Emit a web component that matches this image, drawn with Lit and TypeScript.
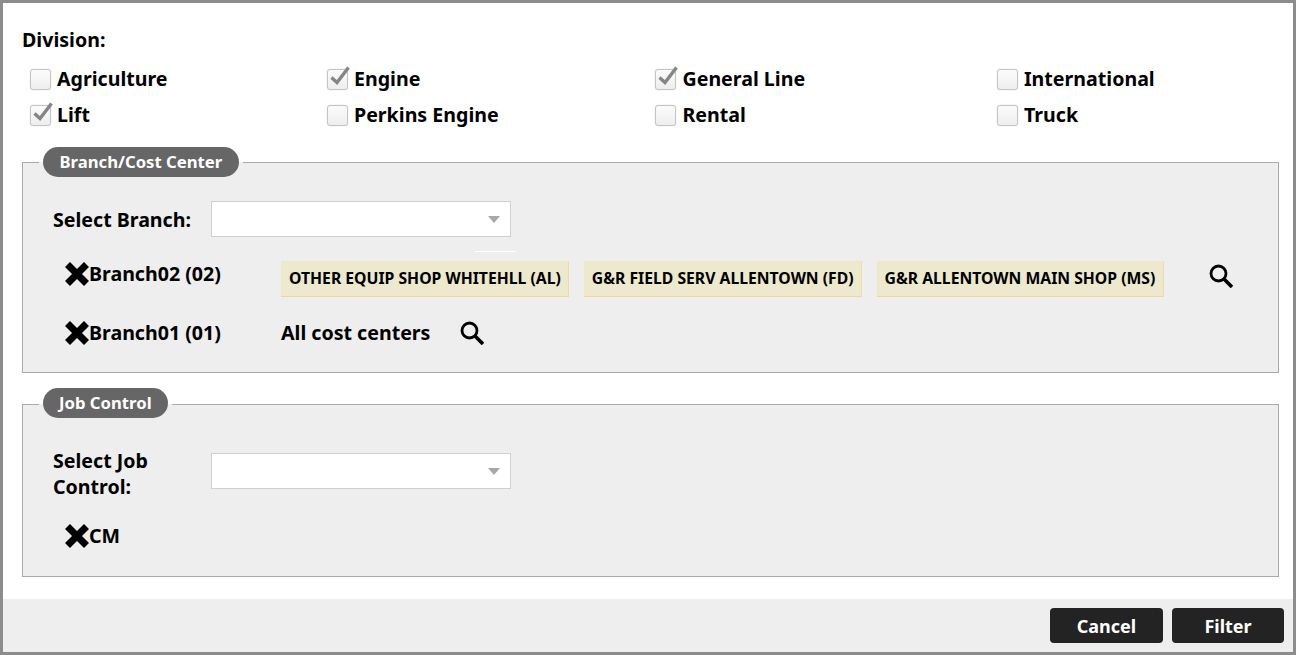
import { LitElement, html, css, svg } from "lit";
import { customElement } from "lit/decorators.js";

const divisions: [string, boolean][] = [
  ["Agriculture", false], ["Engine", true], ["General Line", true], ["International", false],
  ["Lift", true], ["Perkins Engine", false], ["Rental", false], ["Truck", false],
];

const searchIcon = html`<svg class="search" viewBox="0 0 24 24" width="24" height="24"><circle cx="9.5" cy="9.5" r="7.5" fill="none" stroke="#000" stroke-width="2.8"/><path d="M15 15 L23 23" stroke="#000" stroke-width="3.6" fill="none"/></svg>`;
const xIcon = html`<svg class="x" viewBox="0 0 26 26" width="26" height="26"><path d="M3.5 3.5 L22.5 22.5 M22.5 3.5 L3.5 22.5" stroke="#000" stroke-width="7" fill="none"/></svg>`;
const check = svg`<path d="M3.5 11.5 L9 16.5 L20.5 1.5" fill="none" stroke="#858585" stroke-width="3.4"/>`;

@customElement("app-root")
export class AppRoot extends LitElement {
  static styles = css`
    :host { display: block; width: 1296px; height: 655px; box-sizing: border-box; border: 3px solid #8c8c8c; background: #fff;
      font-family: "Noto Sans", sans-serif; font-weight: 700; font-size: 19.6px; color: #000; line-height: 26px; overflow: hidden; position: relative; }
    .body { height: 596px; box-sizing: border-box; padding: 24px 14px 0 19px; }
    .title { height: 26px; }
    .grid { display: grid; grid-template-columns: 297px 328.5px 341.5px 250px; grid-auto-rows: 36px; margin: 8px 0 0 7.5px; }
    .opt { display: flex; align-items: center; gap: 6.5px; }
    .box { width: 19px; height: 19px; border: 1px solid #c4c4c4; border-radius: 3px; background: linear-gradient(#fbfbfb,#eeeeee); box-shadow: 0 0 1px #bbb; position: relative; flex: none; }
    .box svg { position: absolute; left: 0; top: -4px; width: 22px; height: 22px; }
    fieldset { margin: 0; border: 1px solid #aaa; background: #eeeeee; padding: 0; min-width: 0; box-sizing: border-box; }
    fieldset.branch { margin-top: 14px; height: 226px; }
    fieldset.job { margin-top: 15px; height: 189px; }
    legend { margin-left: 16px; padding: 0 4px; line-height: 0; }
    .job legend { height: 32px; }
    .pill { display: inline-block; height: 30px; line-height: 30px; padding: 0 16.5px; border-radius: 15px; background: #666; color: #fff; font-size: 16.7px; }
    .job .pill { padding: 0 16px; }
    .sel-row { display: flex; align-items: flex-start; margin-left: 30px; }
    .branch .sel-row { margin-top: 24px; }
    .job .sel-row { margin-top: 28px; }
    .sel-label { width: 158px; flex: none; }
    .branch .sel-label { margin-top: 6px; }
    .select { width: 298px; height: 34px; background: #fff; border: 1px solid #d0d0d0; position: relative; flex: none; }
    .job .select { margin-top: 5px; }
    .select::after { content: ""; position: absolute; right: 10px; top: 14px; border: 6.5px solid transparent; border-top: 7px solid #a8a8a8; border-bottom: 0; }
    .tick { position: absolute; left: 472px; top: 248px; width: 41px; height: 1px; background: #fff; }
    .item { display: flex; align-items: center; margin-left: 41px; }
    .item .name { display: flex; align-items: center; width: 217px; flex: none; }
    .x { flex: none; margin-right: -1px; }
    .tag { display: inline-block; height: 36px; line-height: 34px; padding: 0 7px 0 8px; margin-right: 15px; background: #ece9cf; border-bottom: 1px solid #f0d98a; border-right: 1px solid #f0dca0; font-size: 15.74px; box-sizing: border-box; white-space: nowrap; }
    .tag.last { margin-right: 0; padding-right: 8px; }
    .search { display: block; flex: none; }
    .r1 { margin-top: 7px; height: 76px; align-items: flex-start; }
    .r1 .name { margin-top: 17px; }
    .r1 .tag { margin-top: 17px; }
    .r1 .search { margin: 20px 0 0 45px; }
    .r2 .search { margin-left: 30px; }
    .cm { margin-top: 23px; }
    .footer { height: 53px; background: #eeeeee; display: flex; justify-content: flex-end; align-items: flex-start; gap: 9px; padding: 9px 9px 0 0; box-sizing: border-box; }
    button { height: 35px; border: 0; border-radius: 4px; background: #232323; color: #fff; font: 700 18px "Noto Sans", sans-serif; padding: 0; }
    .cancel { width: 113px; }
    .filter { width: 112px; }
  `;

  render() {
    return html`
      <div class="body">
        <div class="title">Division:</div>
        <div class="grid">
          ${divisions.map(([n, c]) => html`<div class="opt"><span class="box">${c ? html`<svg viewBox="0 0 22 22">${check}</svg>` : ""}</span><span>${n}</span></div>`)}
        </div>
        <fieldset class="branch">
          <legend><span class="pill">Branch/Cost Center</span></legend>
          <div class="sel-row"><span class="sel-label">Select Branch:</span><div class="select"></div></div>
          <div class="item r1">
            <span class="name">${xIcon}Branch02 (02)</span>
            <span class="tag">OTHER EQUIP SHOP WHITEHLL (AL)</span>
            <span class="tag">G&amp;R FIELD SERV ALLENTOWN (FD)</span>
            <span class="tag last">G&amp;R ALLENTOWN MAIN SHOP (MS)</span>
            ${searchIcon}
          </div>
          <div class="item r2">
            <span class="name">${xIcon}Branch01 (01)</span>
            <span>All cost centers</span>
            ${searchIcon}
          </div>
        </fieldset>
        <fieldset class="job">
          <legend><span class="pill">Job Control</span></legend>
          <div class="sel-row"><span class="sel-label">Select Job<br />Control:</span><div class="select"></div></div>
          <div class="item cm"><span class="name">${xIcon}CM</span></div>
        </fieldset>
      </div>
      <div class="tick"></div>
      <div class="footer"><button class="cancel">Cancel</button><button class="filter">Filter</button></div>
    `;
  }
}
